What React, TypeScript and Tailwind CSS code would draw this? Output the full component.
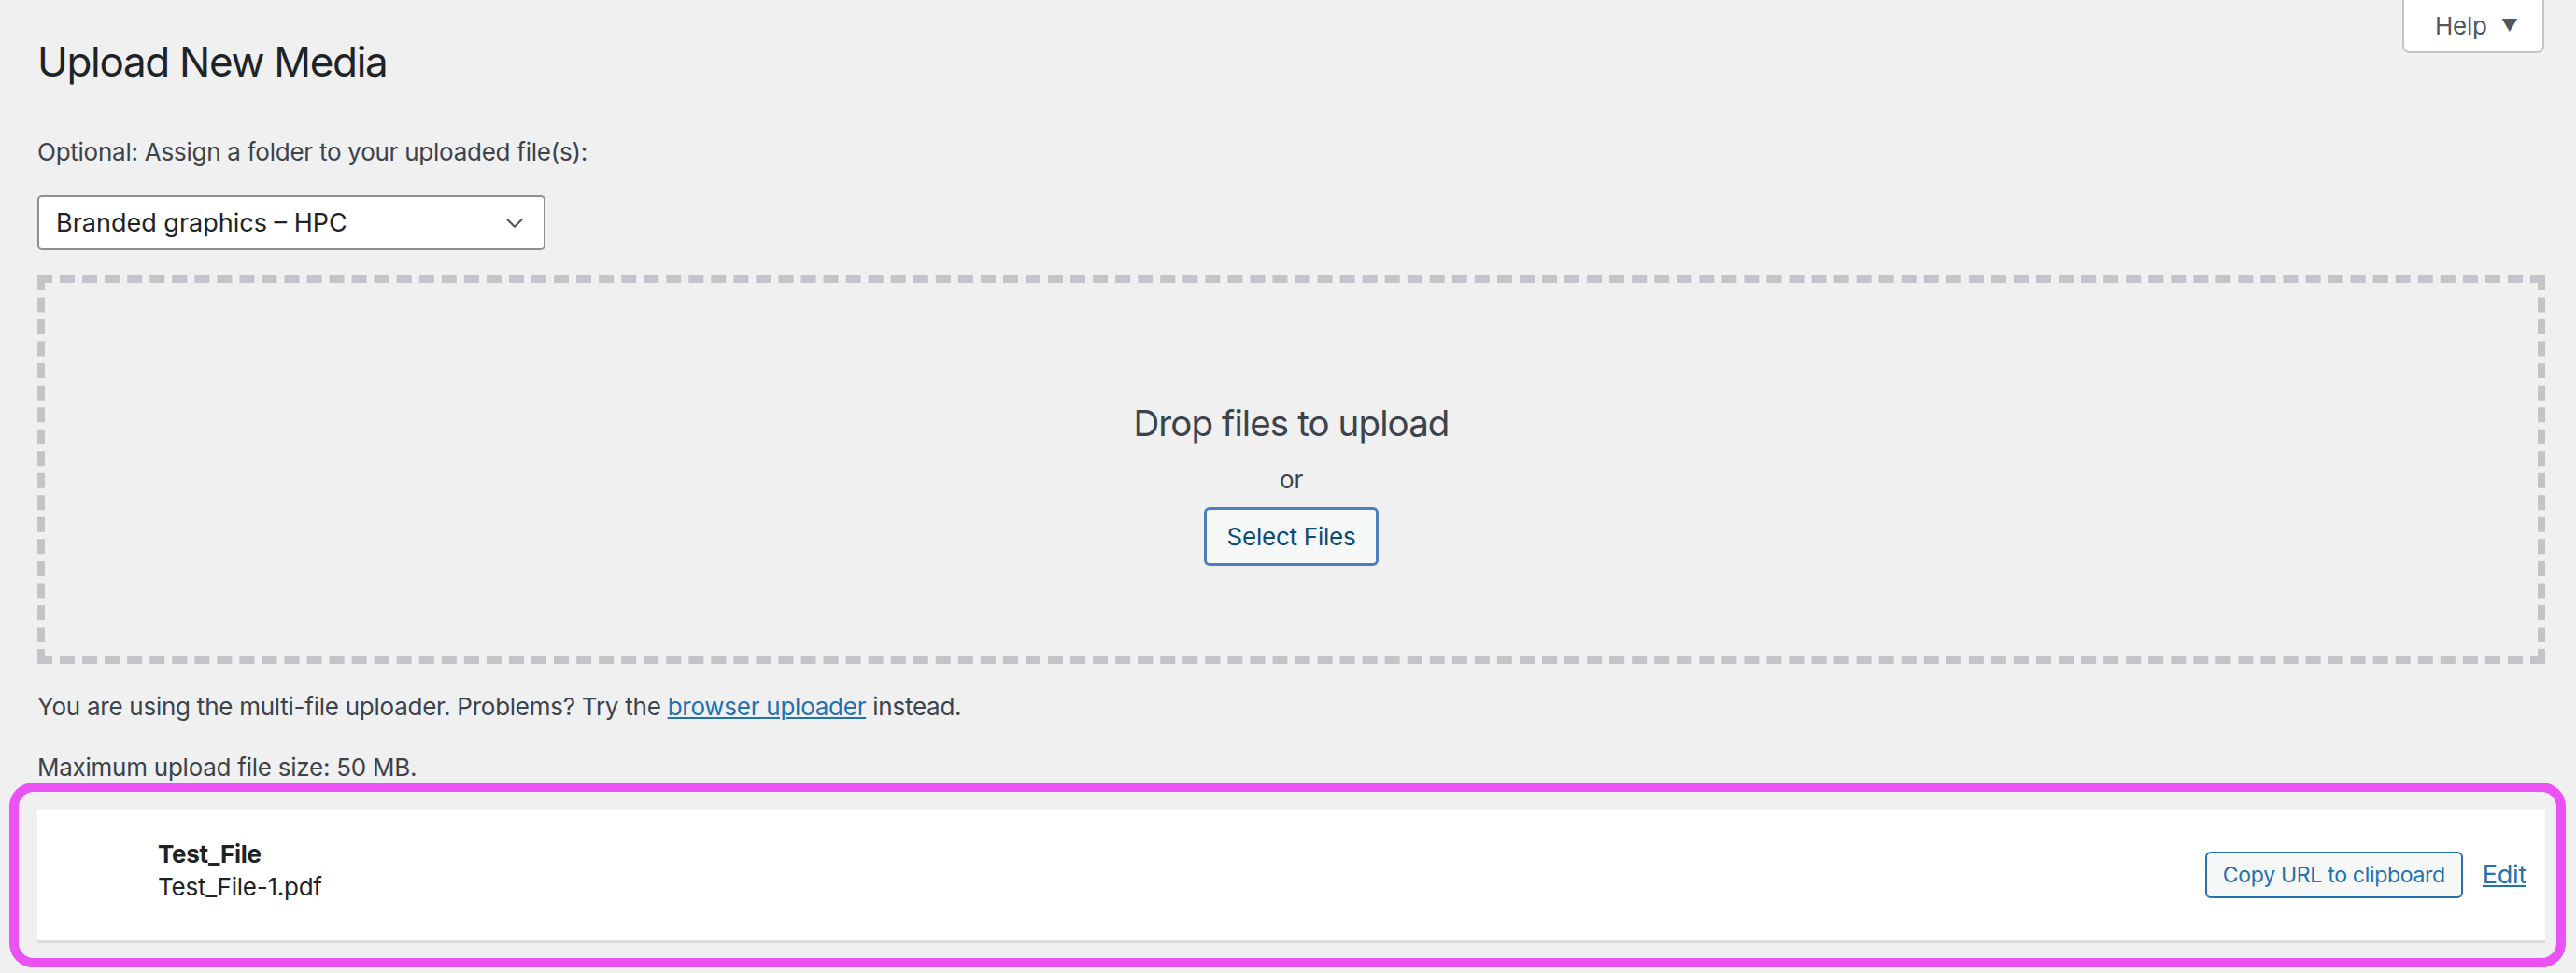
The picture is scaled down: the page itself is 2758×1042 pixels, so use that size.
import { ChevronDown } from "lucide-react";

export default function App() {
  return (
    <div className="relative min-h-[1042px] bg-[#f0f0f1] pl-[40px] pr-[33px] font-['Inter',sans-serif] text-[26px] leading-[36px] tracking-[-0.25px] text-[#3c434a]">
      {/* help tab */}
      <div className="absolute right-[34px] top-0 flex h-[57px] w-[152px] items-center gap-[15px] rounded-b-[8px] border-2 border-t-0 border-[#c3c4c7] bg-white pl-[33px] text-[#50575e]">
        <span>Help</span>
        <span className="text-[18px]">▼</span>
      </div>

      <h1 className="pt-[36px] text-[44px] leading-[60px] font-normal tracking-[-1.3px] text-[#1d2327]">Upload New Media</h1>

      <p className="mt-[49px]">Optional: Assign a folder to your uploaded file(s):</p>

      <div className="mt-[28px] flex h-[59px] w-[544px] items-center justify-between rounded-[5px] border-2 border-[#8c8f94] bg-white pl-[18px] pr-[16px] text-[27px] tracking-normal text-[#1d2327]">
        <span>Branded graphics – HPC</span>
        <ChevronDown size={30} strokeWidth={1.75} className="text-[#50575e]" />
      </div>

      <div className="mt-[27px] flex h-[416px] flex-col items-center border-8 border-dashed border-[#c3c4c7] pt-[124px]">
        <p className="text-[38.5px] leading-[52px] tracking-[-0.9px]">Drop files to upload</p>
        <p className="mt-[17px]">or</p>
        <button className="mt-[11px] h-[63px] rounded-[6px] border-[3px] border-[#4a80c2] bg-[#f6f7f7] px-[22px] text-[26px] text-[#0a4b78]">
          Select Files
        </button>
      </div>

      <p className="mt-[28px]">
        You are using the multi-file uploader. Problems? Try the{" "}
        <a href="#" className="text-[#2271b1] underline">browser uploader</a> instead.
      </p>

      <p className="mt-[29px]">Maximum upload file size: 50 MB.</p>

      <div className="relative mt-[27px]">
        <div className="flex h-[143px] items-center justify-between border-b-[3px] border-[#dcdcde] bg-white pl-[129px] pr-[20px]">
          <div className="-mt-[10px] leading-[35px]">
            <div className="font-bold text-[#1d2327]">Test_File</div>
            <div className="text-[#1d2327]">Test_File-1.pdf</div>
          </div>
          <div className="flex items-center gap-[21px]">
            <button className="h-[50px] rounded-[6px] border-2 border-[#2271b1] bg-[#f6f7f7] px-[17px] text-[23px] tracking-[-0.3px] text-[#2271b1]">
              Copy URL to clipboard
            </button>
            <a href="#" className="text-[27px] text-[#2271b1] underline">Edit</a>
          </div>
        </div>
        <div className="pointer-events-none absolute -top-[29px] -left-[30px] -right-[22px] -bottom-[26px] rounded-[26px] border-[10px] border-[#eb52f3]" />
      </div>
    </div>
  );
}
